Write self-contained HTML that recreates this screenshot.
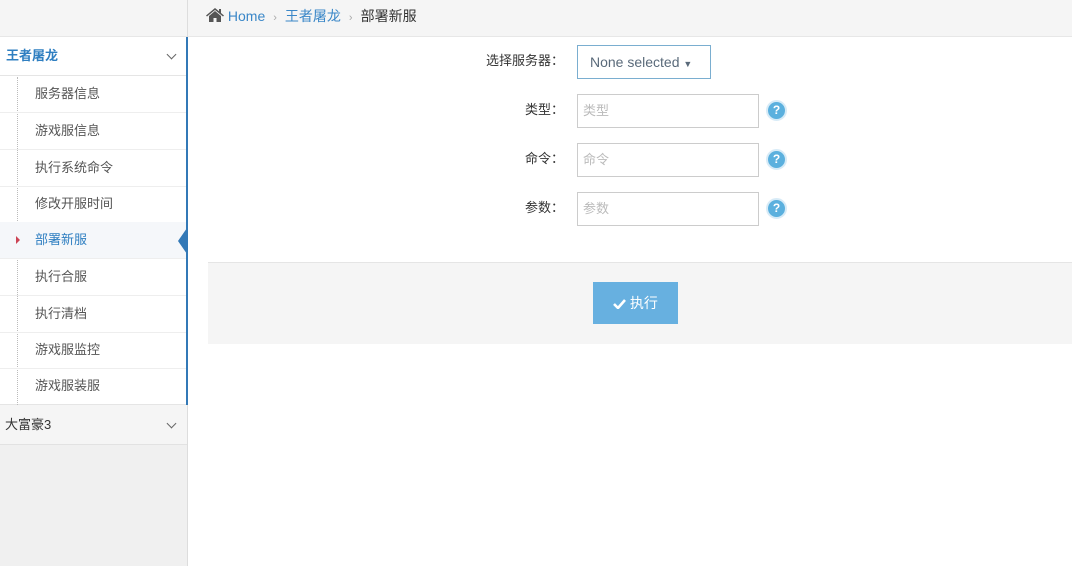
<!DOCTYPE html>
<html><head><meta charset="utf-8"><style>
*{margin:0;padding:0;box-sizing:border-box}
body{width:1072px;height:566px;overflow:hidden;background:#fff;font-family:"Liberation Sans","Noto Sans CJK SC",sans-serif;font-size:13px;color:#333;position:relative}
.top{position:absolute;left:0;top:0;width:1072px;height:37px;background:#f5f5f5;border-bottom:1px solid #e7e7e7}
.side{position:absolute;left:0;top:37px;width:188px;height:529px;background:#f0f0f0;border-right:1px solid #ddd}
.vsep{position:absolute;left:187px;top:0;width:1px;height:37px;background:#ddd}
.grp{position:absolute;left:0;width:187px;background:#fff;border-bottom:1px solid #e5e5e5}
.item{position:absolute;left:0;width:186px;height:37px;border-bottom:1px solid #eee;color:#555;line-height:36px;padding-left:35px}
.chev{position:absolute;right:12px;top:14px;width:7px;height:7px;border-right:1.3px solid #666;border-bottom:1.3px solid #666;transform:rotate(45deg)}
.bc{position:absolute;top:6px;left:206px;font-size:14px;color:#333}
.bc a{color:#3a87c8}
.bc .s{color:#aaa;margin:0 8px;font-size:11px}
.lbl{position:absolute;width:130px;text-align:right;left:434px;font-size:13px;color:#333;font-family:"Noto Sans CJK SC",sans-serif}
.inp{position:absolute;left:577px;width:182px;height:34px;border:1px solid #ccc;color:#bbb;padding-left:5px;line-height:32px}
.q{position:absolute;left:766px;width:21px;height:21px;border-radius:50%;background:#5bb0de;border:2px solid #d7ebf7;color:#fff;font-weight:bold;font-size:12px;text-align:center;line-height:17px}
</style></head><body>
<div class="top"></div>
<div class="vsep"></div>
<div class="bc"><svg width="18" height="14" viewBox="0 0 18 14" style="vertical-align:-1px"><path d="M9 0L0 7.5l1 1L9 2l8 6.5 1-1-3-2.5V1h-2v2.3z" fill="#555"/><path d="M3 8v6h4.5v-4h3v4H15V8L9 3z" fill="#555"/></svg> <a>Home</a><span class="s">›</span><a>王者屠龙</a><span class="s">›</span>部署新服</div>
<div class="side"></div>
<div class="grp" style="top:37px;height:368px">
 <div style="position:absolute;left:17px;top:40px;height:328px;border-left:1px dotted #bbb"></div>
 <div style="height:39px;border-bottom:1px solid #e5e5e5;line-height:38px;padding-left:6px;color:#2f7fc1;font-weight:bold">王者屠龙<span class="chev"></span></div>
 <div class="item" style="top:39px">服务器信息</div>
 <div class="item" style="top:76px">游戏服信息</div>
 <div class="item" style="top:113px">执行系统命令</div>
 <div class="item" style="top:149px">修改开服时间</div>
 <div class="item" style="top:185px;background:#f5f7fa;color:#2f7fc1">部署新服</div>
 <div style="position:absolute;left:16px;top:199px;border-left:4px solid #c45;border-top:4px solid transparent;border-bottom:4px solid transparent"></div>
 <div class="item" style="top:222px">执行合服</div>
 <div class="item" style="top:259px">执行清档</div>
 <div class="item" style="top:295px">游戏服监控</div>
 <div class="item" style="top:331px;border-bottom:none">游戏服装服</div>
 <div style="position:absolute;left:178px;top:191px;border-right:9px solid #3379b7;border-top:13px solid transparent;border-bottom:13px solid transparent"></div>
</div>
<div style="position:absolute;left:186px;top:37px;width:2px;height:368px;background:#3379b7"></div>
<div style="position:absolute;left:0;top:405px;width:187px;height:40px;background:#f5f5f5;border-bottom:1px solid #e2e2e2;line-height:39px;padding-left:5px;color:#333">大富豪3<span class="chev" style="top:15px"></span></div>

<div class="lbl" style="top:50px">选择服务器：</div>
<div style="position:absolute;left:577px;top:45px;width:134px;height:34px;border:1px solid #7aaed0;color:#5a6a7a;font-size:14px;line-height:32px;padding-left:12px">None selected <span style="font-size:9px">▼</span></div>
<div class="lbl" style="top:99px">类型：</div>
<div class="inp" style="top:94px">类型</div>
<div class="q" style="top:100px">?</div>
<div class="lbl" style="top:148px">命令：</div>
<div class="inp" style="top:143px">命令</div>
<div class="q" style="top:149px">?</div>
<div class="lbl" style="top:197px">参数：</div>
<div class="inp" style="top:192px">参数</div>
<div class="q" style="top:198px">?</div>

<div style="position:absolute;left:208px;top:262px;width:864px;height:82px;background:#f5f5f5;border-top:1px solid #e5e5e5"></div>
<div style="position:absolute;left:593px;top:282px;width:85px;height:42px;background:#67b0e0;color:#fff;font-size:14px;line-height:42px;text-align:center"><svg width="13" height="11" viewBox="0 0 13 11" style="vertical-align:-1px"><path d="M1 6l4 4 7-8" stroke="#fff" stroke-width="2.6" fill="none"/></svg> 执行</div>
</body></html>
